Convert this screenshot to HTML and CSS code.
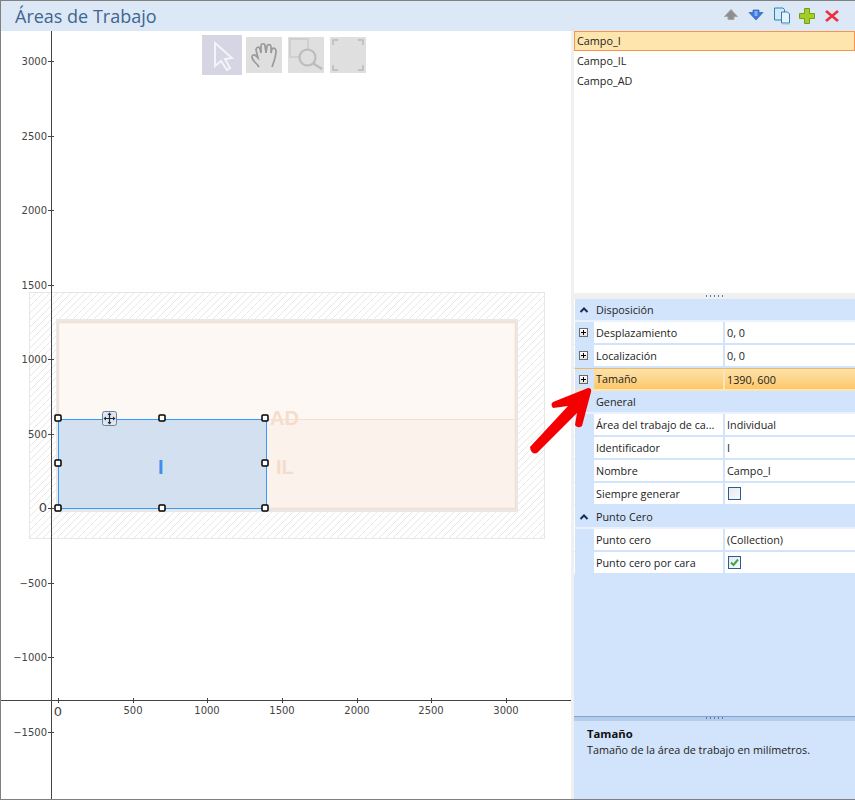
FILE: index.html
```html
<!DOCTYPE html>
<html lang="es">
  <head>
    <meta charset="UTF-8" />
    <title>Áreas de Trabajo</title>
    <link rel="stylesheet" href="styles.css">
  </head>
  <body>
    <div class="window">
      <header class="titlebar">
        <h1 class="title">Áreas de Trabajo</h1>
        <div class="actions">
          <svg class="action" width="18" height="18" viewBox="1 0 18 18"><path d="M9 2.500L15.500 9.500H12V12.500H6V9.500H2.500Z" fill="#8e8e8e" stroke="#a5a5a5"/></svg>
          <svg class="action" width="18" height="18" viewBox="1 0 18 18"><path d="M2 5.500H6V3H12V5.500H16L9 13Z" fill="#3f78dc" stroke="#2f5fb5" stroke-width=".7"/><path d="M9 4V9" stroke="#7fb0f5" stroke-width="3"/></svg>
          <svg class="action" width="18" height="18" viewBox="0 0 18 18"><path d="M1.500 1H10L11.500 2.500V13H1.500Z" fill="#d5e8f3" stroke="#2a83bb"/><path d="M8.500 5H14.500L16.500 7V16H8.500Z" fill="#e8f2f8" stroke="#2a83bb"/><path d="M9 17H17" stroke="#9cc4dd"/></svg>
          <svg class="action" width="18" height="18" viewBox="0 0 18 18"><path d="M6.500 1.500H11.500V6.500H16.500V11.500H11.500V16.500H6.500V11.500H1.500V6.500H6.500Z" fill="#a4cd28" stroke="#74a010"/></svg>
          <svg class="action" width="18" height="18" viewBox="0 0 18 18"><path d="M3 4L15 14M15 4L3 14" stroke="#ee3038" stroke-width="2.600"/></svg>
        </div>
      </header>

      <div class="content">
        <div class="canvas">
          <svg class="chart" width="570" height="768" viewBox="1 31 570 768">
            <defs>
              <pattern id="hatch" width="7" height="7" patternUnits="userSpaceOnUse">
                <path d="M-1 8L8 -1M-1 1L1 -1M6 8L8 6" stroke="#e8e8e8" stroke-width="1"/>
              </pattern>
            </defs>

            <!-- work area -->
            <rect x="29.500" y="292.500" width="515" height="246" fill="url(#hatch)" stroke="#e6e6e6"/>
            <rect x="56" y="319" width="462" height="193" fill="#e8e8e8"/>
            <rect x="58" y="322" width="458" height="97" fill="#fdf8f4"/>
            <rect x="58" y="419" width="458" height="90" fill="#fbf2ec"/>
            <rect x="58.500" y="322.500" width="457" height="186" fill="none" stroke="#f7dfd0" stroke-width="1.500"/>
            <path d="M58 419.500H516" stroke="#f7dfd0"/>
            <text class="zone" x="270" y="425">AD</text>
            <text class="zone" x="276" y="474">IL</text>

            <!-- selected area -->
            <rect x="58.500" y="419.500" width="208" height="89" fill="#d3e0f0" stroke="#3399ff"/>
            <text class="zone-on" x="158" y="474">I</text>
            <g class="handles">
              <rect x="55" y="415" width="6" height="6" rx="1"/>
              <rect x="159" y="415" width="6" height="6" rx="1"/>
              <rect x="262" y="415" width="6" height="6" rx="1"/>
              <rect x="55" y="460" width="6" height="6" rx="1"/>
              <rect x="262" y="460" width="6" height="6" rx="1"/>
              <rect x="55" y="505" width="6" height="6" rx="1"/>
              <rect x="159" y="505" width="6" height="6" rx="1"/>
              <rect x="262" y="505" width="6" height="6" rx="1"/>
            </g>
            <rect x="102.500" y="411.500" width="14" height="14" rx="2" fill="#dfe6f0" stroke="#6d7f9e"/>
            <path d="M104 418.500H115M109.500 413V424" stroke="#222a38" stroke-width="1.200"/>
            <path d="M109.500 412.500L107.500 415H111.500ZM109.500 424.500L107.500 422H111.500ZM103.500 418.500L106 416.500V420.500ZM115.500 418.500L113 416.500V420.500Z" fill="#222a38"/>

            <!-- axes -->
            <path class="axis" d="M51.500 31V799M1 700.500H571"/>
            <path class="axis" d="M48 61.500H54M48 136.500H54M48 210.500H54M48 285.500H54M48 359.500H54M48 434.500H54M48 508.500H54M48 583.500H54M48 657.500H54M48 732.500H54"/>
            <path class="axis" d="M58.500 698V703M133.500 698V703M207.500 698V703M282.500 698V703M357.500 698V703M431.500 698V703M506.500 698V703"/>
            <g class="tick-y">
              <text x="47" y="65">3000</text>
              <text x="47" y="140">2500</text>
              <text x="47" y="214">2000</text>
              <text x="47" y="289">1500</text>
              <text x="47" y="363">1000</text>
              <text x="47" y="438">500</text>
              <text class="tick-zero" x="47" y="512">0</text>
              <text x="47" y="587">−500</text>
              <text x="47" y="661">−1000</text>
              <text x="47" y="736">−1500</text>
            </g>
            <g class="tick-x">
              <text class="tick-zero" x="58" y="716">0</text>
              <text x="133" y="714">500</text>
              <text x="207" y="714">1000</text>
              <text x="282" y="714">1500</text>
              <text x="357" y="714">2000</text>
              <text x="431" y="714">2500</text>
              <text x="506" y="714">3000</text>
            </g>
          </svg>

          <div class="toolbar">
            <button class="tool tool-on">
              <svg width="40" height="40" viewBox="0 0 40 40"><path d="M13 8V31L19 26L25 35L28 33L23 24L30 23Z" fill="none" stroke="#f3f3f8" stroke-width="2"/></svg>
            </button>
            <button class="tool">
              <svg width="36" height="36" viewBox="0 0 36 36" fill="none" stroke="#9a9a9a" stroke-width="1.700"><path d="M13 30C11 26 6 24 6 20C6 18 8 17 10 19L12 21L10 13C10 10 13 9 14 12L15 16L15 9C15 6 19 6 19 9L20 16L21 9C22 7 25 7 25 10L25 16L26 12C28 10 30 12 30 14C30 20 28 24 26 30"/></svg>
            </button>
            <button class="tool">
              <svg width="36" height="36" viewBox="0 0 36 36" fill="none" stroke="#cfcfcf" stroke-width="2"><path d="M20 13V2H2V20H11"/><circle cx="19.500" cy="20.500" r="8" stroke="#bcbcbc" stroke-width="2.200"/><path d="M25.500 26.500L34 32" stroke="#bcbcbc" stroke-width="2.500"/></svg>
            </button>
            <button class="tool">
              <svg width="36" height="36" viewBox="0 0 36 36" fill="none" stroke="#bbb" stroke-width="1.500"><path d="M3 8V3H8M28 3H33V8M3 28V33H8M28 33H33V28"/></svg>
            </button>
          </div>
        </div>

        <div class="side">
          <ul class="fields">
            <li class="field field-on">Campo_I</li>
            <li class="field">Campo_IL</li>
            <li class="field">Campo_AD</li>
          </ul>
          <div class="grip"><span class="dots"></span></div>

          <div class="grid">
            <div class="group"><svg class="chevron" width="10" height="8" viewBox="0 0 10 8"><path d="M1.500 6L5 2.500L8.500 6" fill="none" stroke="#14305a" stroke-width="2"/></svg><span>Disposición</span></div>
            <div class="row">
              <span class="gutter"><i class="plus"></i></span><span class="name">Desplazamiento</span><span class="value">0, 0</span>
            </div>
            <div class="row">
              <span class="gutter"><i class="plus"></i></span><span class="name">Localización</span><span class="value">0, 0</span>
            </div>
            <div class="row row-on">
              <span class="gutter"><i class="plus"></i></span><span class="name">Tamaño</span><span class="value">1390, 600</span>
            </div>
            <div class="group"><span>General</span></div>
            <div class="row">
              <span class="gutter"></span><span class="name">Área del trabajo de ca...</span><span class="value">Individual</span>
            </div>
            <div class="row">
              <span class="gutter"></span><span class="name">Identificador</span><span class="value">I</span>
            </div>
            <div class="row">
              <span class="gutter"></span><span class="name">Nombre</span><span class="value">Campo_I</span>
            </div>
            <div class="row">
              <span class="gutter"></span><span class="name">Siempre generar</span><span class="value"><i class="check"></i></span>
            </div>
            <div class="group"><svg class="chevron" width="10" height="8" viewBox="0 0 10 8"><path d="M1.500 6L5 2.500L8.500 6" fill="none" stroke="#14305a" stroke-width="2"/></svg><span>Punto Cero</span></div>
            <div class="row">
              <span class="gutter"></span><span class="name">Punto cero</span><span class="value">(Collection)</span>
            </div>
            <div class="row">
              <span class="gutter"></span><span class="name">Punto cero por cara</span>
              <span class="value"><i class="check"><svg width="11" height="11" viewBox="0 0 11 11"><path d="M2 5.500L4.500 8L9 2.500" fill="none" stroke="#3fa84a" stroke-width="2"/></svg></i></span>
            </div>
          </div>

          <div class="help">
            <div class="help-grip"><span class="dots"></span></div>
            <strong class="help-title">Tamaño</strong>
            <p class="help-text">Tamaño de la área de trabajo en milímetros.</p>
          </div>
        </div>
      </div>

      <svg class="pointer" width="75" height="75" viewBox="525 385 75 75">
        <path d="M530 447L568 406L553 408Q550 404 553 402L588 388Q592 388 591 392L582 426Q578 429 575 425L577 413L537 453Q531 455 530 447Z" fill="#f40000"/>
      </svg>
    </div>
  </body>
</html>
```

FILE: styles.css
```css
* {
  box-sizing: border-box;
}

body {
  margin: 0;
  background-color: white;
  font-family: "Open Sans", "Noto Sans", sans-serif;
  font-size: 10.8px;
  color: #222;
}

.window {
  position: relative;
  width: 855px;
  height: 800px;
  display: flex;
  flex-direction: column;
  border: 1px solid #808080;
  border-right: 0;
  overflow: hidden;
}

.titlebar {
  height: 30px;
  flex: none;
  display: flex;
  justify-content: space-between;
  align-items: center;
  padding: 0 14px;
  background-color: #dce8f6;
}

.title {
  margin: 0;
  font-size: 18px;
  font-weight: 400;
  color: #3f6590;
}

.actions {
  display: flex;
  gap: 7px;
}

.action {
  display: block;
}

.content {
  flex: 1;
  display: flex;
  min-height: 0;
}

.canvas {
  position: relative;
  width: 570px;
  flex: none;
  background-color: white;
}

.chart {
  display: block;
}

.axis {
  fill: none;
  stroke: #444;
  stroke-width: 1;
}

.tick-y text,
.tick-x text {
  font-family: "DejaVu Sans", sans-serif;
  font-size: 10px;
  fill: #444;
}

.tick-y text {
  text-anchor: end;
}

.tick-x text {
  text-anchor: middle;
}

.tick-y .tick-zero,
.tick-x .tick-zero {
  font-size: 13px;
}

.zone,
.zone-on {
  font-family: "Liberation Sans", sans-serif;
  font-size: 20px;
  font-weight: bold;
  fill: #f6dccb;
}

.zone-on {
  fill: #3f8fe8;
}

.handles rect {
  fill: white;
  stroke: black;
  stroke-width: 1.500;
}

.toolbar {
  position: absolute;
  top: 4px;
  left: 201px;
  display: flex;
  align-items: center;
  gap: 6px;
}

.tool {
  display: block;
  width: 36px;
  height: 36px;
  padding: 0;
  border: 0;
  background-color: #dfdfdf;
}

.tool svg {
  display: block;
}

.tool-on {
  width: 40px;
  height: 40px;
  margin-right: -2px;
  background-color: #d5d5e3;
}

.side {
  flex: 1;
  display: flex;
  flex-direction: column;
  min-width: 0;
  border-left: 3px solid #f0f0f0;
}

.fields {
  height: 262px;
  flex: none;
  margin: 0;
  padding: 0;
  list-style: none;
  background-color: white;
}

.field {
  height: 20px;
  padding-left: 3px;
  line-height: 20px;
}

.field-on {
  background-color: #fee4ad;
  border: 1px solid #f79646;
  padding-left: 2px;
  line-height: 18px;
}

.grip {
  height: 6px;
  flex: none;
  display: flex;
  justify-content: center;
  align-items: center;
  background-color: #f0f0f0;
}

.dots {
  display: block;
  width: 18px;
  height: 2px;
  background: repeating-linear-gradient(90deg, #5a7ca8 0 1px, transparent 1px 4px);
}

.grid {
  flex: 1;
  min-height: 0;
  background-color: #d2e4fb;
}

.group,
.row {
  height: 23px;
  display: flex;
  border-left: 1px solid white;
}

.group {
  position: relative;
  align-items: center;
  padding-left: 21px;
  border-bottom: 2px solid #eaf2fd;
}

.chevron {
  position: absolute;
  left: 4px;
  top: 7px;
}

.row {
  align-items: stretch;
  background-color: white;
  border-bottom: 2px solid #d2e4fb;
}

.gutter {
  width: 19px;
  flex: none;
  display: flex;
  justify-content: center;
  align-items: center;
  padding-right: 2px;
  background-color: #d2e4fb;
}

.plus {
  position: relative;
  display: block;
  width: 9px;
  height: 9px;
  border: 1px solid #6a6a6a;
  background: linear-gradient(#fff, #e2e2e2);
}

.plus::before,
.plus::after {
  content: "";
  position: absolute;
  background-color: black;
}

.plus::before {
  left: 1px;
  top: 3px;
  width: 5px;
  height: 1px;
}

.plus::after {
  left: 3px;
  top: 1px;
  width: 1px;
  height: 5px;
}

.name {
  width: 131px;
  flex: none;
  padding-left: 2px;
  line-height: 21px;
  border-right: 2px solid #d2e4fb;
}

.value {
  flex: 1;
  display: flex;
  align-items: center;
  padding-left: 2px;
}

.row-on {
  background: linear-gradient(#fde3ad, #fdc766);
  border-top: 1px solid #f3b661;
  border-bottom: 2px solid #fbe6bb;
}

.row-on .name {
  line-height: 19px;
  border-right-color: #fbe6bb;
}

.check {
  display: block;
  width: 13px;
  height: 13px;
  margin-left: 1px;
  border: 1px solid #2a5d8f;
  background: linear-gradient(135deg, #e6e9ef, #f8f9fb);
}

.check svg {
  display: block;
}

.help {
  height: 83px;
  flex: none;
  background-color: #d2e4fb;
  border-top: 1px solid #7ba6dd;
}

.help-grip {
  height: 4px;
  display: flex;
  justify-content: center;
  background-color: #b5cbe9;
}

.help-title {
  display: block;
  margin: 5px 0 0 13px;
  font-size: 11.3px;
  line-height: 16px;
  color: #111;
}

.help-text {
  margin: 0 0 0 13px;
  line-height: 16px;
}

.pointer {
  position: absolute;
  left: 524px;
  top: 384px;
  pointer-events: none;
}
```
